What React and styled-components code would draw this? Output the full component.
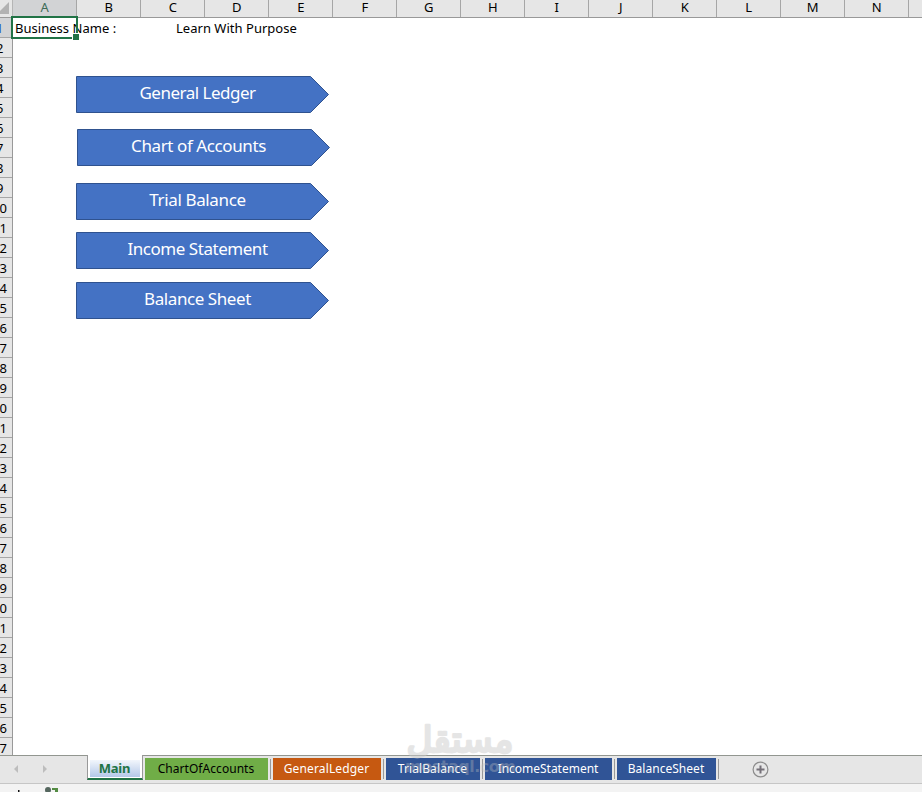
import React from "react";
import styled, { createGlobalStyle } from "styled-components";

const columns = ["A", "B", "C", "D", "E", "F", "G", "H", "I", "J", "K", "L", "M", "N", ""];
const rows = Array.from({ length: 37 }, (_, i) => i + 1);

const links = [
  { name: "General Ledger", gap: 38, spacing: -0.5 },
  { name: "Chart of Accounts", gap: 16, shift: 1, spacing: -0.4 },
  { name: "Trial Balance", gap: 17, spacing: -0.36 },
  { name: "Income Statement", gap: 12, spacing: -0.46 },
  { name: "Balance Sheet", gap: 13, spacing: -0.42 }
];

const tabs = [
  { name: "ChartOfAccounts", color: "#70ad47", text: "#000", width: 123, spacing: 0.05 },
  { name: "GeneralLedger", color: "#c65911", text: "#fff", width: 108, spacing: 0.15 },
  { name: "TrialBalance", color: "#305496", text: "#fff", width: 94, spacing: 0.1 },
  { name: "IncomeStatement", color: "#305496", text: "#fff", width: 127, spacing: -0.02 },
  { name: "BalanceSheet", color: "#305496", text: "#fff", width: 99, spacing: 0.03 }
];

const ArrowLink = ({ name, gap, shift, spacing }) => (
  <Arrow $gap={gap} $shift={shift}>
    <ArrowShape width="254" height="37" viewBox="0 0 254 37">
      <path d="M.5 .5H234.5L252.5 18.5L234.5 36.5H.5Z" fill="#4472c4" stroke="#2f528f" />
    </ArrowShape>
    <ArrowLabel $spacing={spacing}>{name}</ArrowLabel>
  </Arrow>
);

const App = () => {
  return (
    <Window>
      <GlobalStyle />
      <ColumnBar>
        <Corner>
          <svg width="12" height="17" viewBox="0 0 12 17">
            <path d="M9 2V14H-3Z" fill="#b2b2b2" />
          </svg>
        </Corner>
        {columns.map((name, i) => (
          <ColumnHead key={i} $active={i === 0}>
            {name}
          </ColumnHead>
        ))}
      </ColumnBar>
      <Grid>
        <RowBar>
          {rows.map(n => (
            <RowHead key={n} $active={n === 1}>
              <span>{n}</span>
            </RowHead>
          ))}
        </RowBar>
        <Sheet>
          <CellRow>
            <Cell $width={161} $spacing={0.03}>Business Name :</Cell>
            <Cell $width={200} $spacing={0.02}>Learn With Purpose</Cell>
          </CellRow>
          <Selection />
          {links.map(link => (
            <ArrowLink key={link.name} {...link} />
          ))}
        </Sheet>
      </Grid>
      <TabBar>
        <TabNav>
          <svg width="87" height="27" viewBox="0 0 87 27">
            <path d="M18 9V17L14 13ZM43 9V17L47 13Z" fill="#bdbdbd" />
          </svg>
        </TabNav>
        <ActiveTab>
          <ActiveLabel>Main</ActiveLabel>
        </ActiveTab>
        {tabs.map(tab => (
          <React.Fragment key={tab.name}>
            <Tab $color={tab.color} $text={tab.text} $width={tab.width} $spacing={tab.spacing}>
              {tab.name}
            </Tab>
            <Divider />
          </React.Fragment>
        ))}
        <AddSheet>
          <svg width="17" height="17" viewBox="0 0 17 17" fill="none">
            <circle cx="8.5" cy="8.5" r="7.4" stroke="#8c8c8c" strokeWidth="1.2" />
            <path d="M8.5 4.5V12.5M4.5 8.5H12.5" stroke="#757078" strokeWidth="2" />
          </svg>
        </AddSheet>
      </TabBar>
      <StatusBar>
        <svg width="70" height="8" viewBox="0 0 70 8">
          <path d="M18 6h1.5v2h-1.5z" fill="#111" />
          <circle cx="48" cy="6" r="3" fill="#55675f" />
          <path d="M52 4h6v2h-6zM55 6h3v2h-3z" fill="#538b43" />
        </svg>
      </StatusBar>
      <Watermark width="116" height="60" viewBox="0 0 116 60">
        <text x="58" y="30" textAnchor="middle" textLength="107" lengthAdjust="spacingAndGlyphs" className="brand">
          مستقل
        </text>
        <text x="3" y="50" textLength="111" className="site">
          mostaql.com
        </text>
      </Watermark>
    </Window>
  );
};

export default App;

const GlobalStyle = createGlobalStyle`
  body {
    margin: 0;
    overflow: hidden;
    background: #fff;
  }
  * {
    box-sizing: border-box;
  }
`;

const Window = styled.div`
  position: relative;
  display: flex;
  flex-direction: column;
  width: 922px;
  height: 792px;
  overflow: hidden;
  font-family: "Noto Sans", sans-serif;
  font-size: 13px;
  color: #000;
`;

const ColumnBar = styled.div`
  display: flex;
  flex: none;
  height: 18px;
  background: #e6e6e6;
  border-bottom: 1px solid #999;
`;

const Corner = styled.div`
  flex: none;
  width: 13px;
  height: 17px;
  border-right: 1px solid #b5b5b5;

  svg {
    display: block;
  }
`;

const ColumnHead = styled.div`
  flex: none;
  width: 64px;
  height: 17px;
  padding-left: 0.5px;
  line-height: 15px;
  text-align: center;
  border-right: 1px solid #a6a6a6;
  background: ${props => (props.$active ? "#d2d3d5" : "#e6e6e6")};
  color: ${props => (props.$active ? "#3f6b57" : "#000")};
`;

const Grid = styled.div`
  display: flex;
  flex: none;
  height: 737px;
`;

const RowBar = styled.div`
  flex: none;
  width: 13px;
  overflow: hidden;
  border-right: 1px solid #999;
  background: #e6e6e6;
`;

const RowHead = styled.div`
  display: flex;
  justify-content: center;
  width: 12px;
  height: 20px;
  line-height: 21px;
  overflow: hidden;
  border-bottom: 1px solid #a6a6a6;
  background: ${props => (props.$active ? "#d2d3d5" : "#e6e6e6")};
  color: ${props => (props.$active ? "#2458c4" : "#000")};

  span {
    flex: none;
    margin-left: -13px;
    letter-spacing: -0.4px;
  }
`;

const Sheet = styled.div`
  position: relative;
  flex: 1;
`;

const CellRow = styled.div`
  display: flex;
  height: 20px;
  padding-left: 2px;
`;

const Cell = styled.div`
  flex: none;
  width: ${props => props.$width}px;
  line-height: 21px;
  letter-spacing: ${props => props.$spacing}px;
  white-space: nowrap;
`;

const Selection = styled.div`
  position: absolute;
  top: -2px;
  left: -2px;
  width: 67px;
  height: 23px;
  border: 2px solid #217346;

  &::after {
    content: "";
    position: absolute;
    right: -3px;
    bottom: -3px;
    width: 6px;
    height: 6px;
    background: #217346;
    border-top: 1px solid #fff;
    border-left: 1px solid #fff;
  }
`;

const Arrow = styled.div`
  display: grid;
  width: 254px;
  height: 37px;
  margin-top: ${props => props.$gap}px;
  margin-left: ${props => 63 + (props.$shift || 0)}px;
`;

const ArrowShape = styled.svg`
  grid-area: 1 / 1;
`;

const ArrowLabel = styled.div`
  grid-area: 1 / 1;
  padding-right: 11px;
  line-height: 34px;
  text-align: center;
  font-size: 17px;
  letter-spacing: ${props => props.$spacing}px;
  color: #fff;
`;

const TabBar = styled.div`
  display: flex;
  flex: none;
  height: 29px;
  border-top: 1px solid #929690;
  border-bottom: 1px solid #c6c6c6;
  background: #e6e6e6;
`;

const TabNav = styled.div`
  flex: none;
  width: 87px;
`;

const ActiveTab = styled.div`
  flex: none;
  width: 56px;
  height: 25px;
  margin: -1px 2px 0 0;
  padding: 5px 2px 0;
  background: #fff;
  border: 1px solid #999;
  border-top: 0;
  border-bottom: 2px solid #217346;
`;

const ActiveLabel = styled.div`
  height: 17px;
  padding-right: 1px;
  line-height: 17px;
  text-align: center;
  font-weight: 700;
  letter-spacing: -0.2px;
  color: #217346;
  background: linear-gradient(#f2f6fc, #b4c8e8);
`;

const Tab = styled.div`
  flex: none;
  width: ${props => props.$width}px;
  height: 22px;
  margin-top: 2px;
  padding-right: 1px;
  line-height: 21px;
  text-align: center;
  font-size: 12px;
  letter-spacing: ${props => props.$spacing}px;
  color: ${props => props.$text};
  background: ${props => props.$color};
`;

const Divider = styled.div`
  flex: none;
  width: 1px;
  height: 20px;
  margin: 3px 2px 0;
  background: #999;
`;

const AddSheet = styled.div`
  flex: none;
  margin: 5px 0 0 30.5px;

  svg {
    display: block;
  }
`;

const StatusBar = styled.div`
  flex: 1;
  background: #f3f3f3;

  svg {
    display: block;
  }
`;

const Watermark = styled.svg`
  position: absolute;
  left: 402px;
  top: 722px;

  .brand {
    font: 400 36px "DejaVu Sans", sans-serif;
    fill: #cdcdcd;
    stroke: #cdcdcd;
    stroke-width: 2.6px;
    stroke-linejoin: round;
    opacity: 0.5;
  }

  .site {
    font: 700 16px "DejaVu Sans", sans-serif;
    fill: rgba(190, 190, 190, 0.35);
  }
`;
